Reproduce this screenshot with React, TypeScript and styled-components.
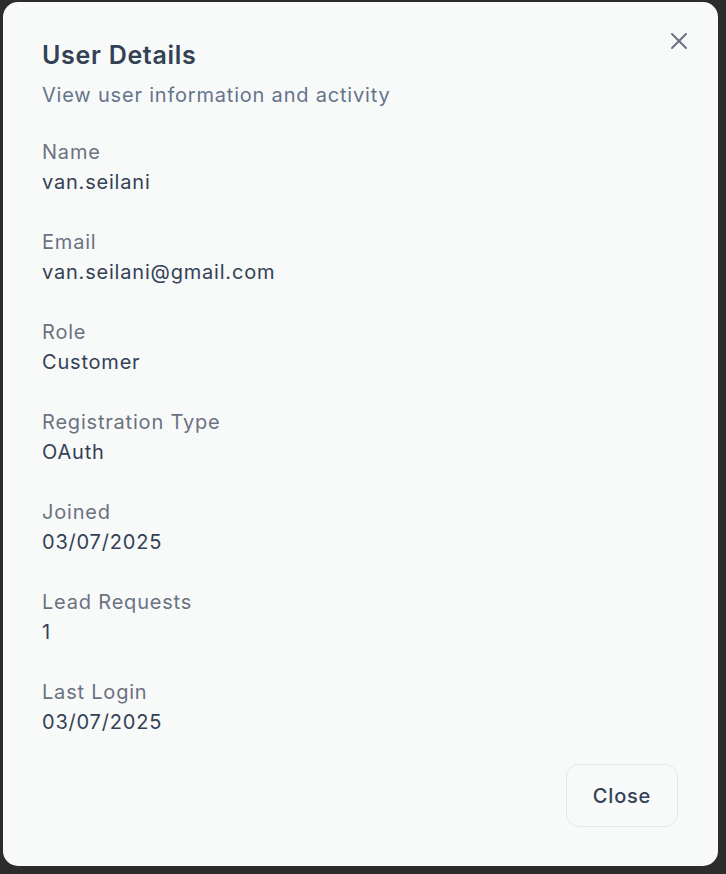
import React from "react";
import styled, { createGlobalStyle } from "styled-components";

const Global = createGlobalStyle`
  html, body { margin: 0; padding: 0; background: #2c2c2c; }
  body { font-family: Inter, "Noto Sans", "Liberation Sans", sans-serif; -webkit-font-smoothing: antialiased; }
  * { box-sizing: border-box; }
`;

const Page = styled.div`
  width: 726px;
  height: 874px;
  padding: 2px 8px 8px 3px;
  background: #2c2c2c;
  display: flex;
`;

const Dialog = styled.div`
  position: relative;
  flex: 1;
  background: #f8f9f9;
  border-radius: 15px;
  padding: 37px 40px 39px 39px;
  display: flex;
  flex-direction: column;
`;

const CloseX = styled.button`
  position: absolute;
  top: 25px;
  right: 25px;
  width: 28px;
  height: 28px;
  padding: 0;
  border: none;
  background: transparent;
  color: #6b7280;
  display: flex;
  align-items: center;
  justify-content: center;
`;

const Header = styled.div`
  display: flex;
  flex-direction: column;
  gap: 9px;
`;

const Title = styled.h2`
  margin: 0;
  font-size: 25px;
  line-height: 32px;
  font-weight: 600;
  color: #334155;
  letter-spacing: 0.7px;
`;

const Subtitle = styled.p`
  margin: 0;
  font-size: 20px;
  line-height: 30px;
  color: #64748b;
  letter-spacing: 0.8px;
`;

const Fields = styled.dl`
  margin: 27px 0 0;
  display: flex;
  flex-direction: column;
  gap: 30px;
`;

const Field = styled.div`
  display: flex;
  flex-direction: column;
`;

const Label = styled.dt`
  font-size: 20px;
  line-height: 30px;
  color: #6b7280;
  letter-spacing: 0.8px;
`;

const Value = styled.dd`
  margin: 0;
  font-size: 20px;
  line-height: 30px;
  color: #334155;
  letter-spacing: 0.8px;
`;

const Footer = styled.div`
  margin-top: auto;
  display: flex;
  justify-content: flex-end;
`;

const Button = styled.button`
  width: 112px;
  height: 63px;
  border: 1px solid #e5e7eb;
  border-radius: 13px;
  background: #f8f9f9;
  font-family: inherit;
  font-size: 20px;
  font-weight: 500;
  color: #334155;
  letter-spacing: 0.8px;
`;

const fields: [string, string][] = [
  ["Name", "van.seilani"],
  ["Email", "van.seilani@gmail.com"],
  ["Role", "Customer"],
  ["Registration Type", "OAuth"],
  ["Joined", "03/07/2025"],
  ["Lead Requests", "1"],
  ["Last Login", "03/07/2025"],
];

export default function App() {
  return (
    <>
      <Global />
      <Page>
        <Dialog>
          <CloseX aria-label="Close">
            <svg width="28" height="28" viewBox="0 0 24 24" fill="none" stroke="currentColor" strokeWidth="1.7" strokeLinecap="round">
              <path d="M18 6 6 18" />
              <path d="m6 6 12 12" />
            </svg>
          </CloseX>
          <Header>
            <Title>User Details</Title>
            <Subtitle>View user information and activity</Subtitle>
          </Header>
          <Fields>
            {fields.map(([l, v]) => (
              <Field key={l}>
                <Label>{l}</Label>
                <Value>{v}</Value>
              </Field>
            ))}
          </Fields>
          <Footer>
            <Button>Close</Button>
          </Footer>
        </Dialog>
      </Page>
    </>
  );
}
